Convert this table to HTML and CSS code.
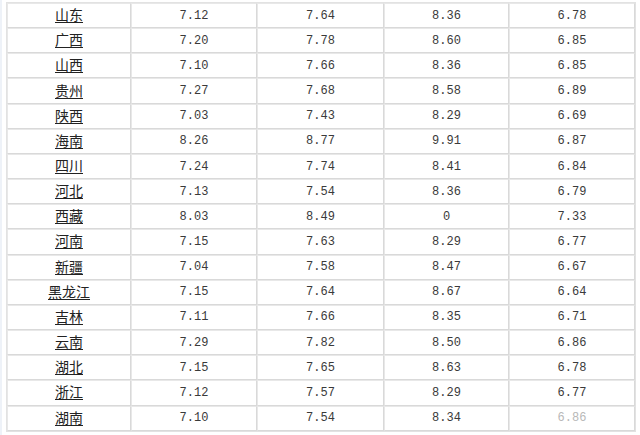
FILE: index.html
```html
<!DOCTYPE html>
<html lang="zh">
<head>
<meta charset="utf-8">
<link rel="stylesheet" href="styles.css">
</head>
<body>
<div class="page">
<table class="data">
<colgroup><col class="c1"><col class="c2"><col class="c3"><col class="c4"><col class="c5"></colgroup>
<tbody>
<tr><td><a href="#">山东</a></td><td>7.12</td><td>7.64</td><td>8.36</td><td>6.78</td></tr>
<tr><td><a href="#">广西</a></td><td>7.20</td><td>7.78</td><td>8.60</td><td>6.85</td></tr>
<tr><td><a href="#">山西</a></td><td>7.10</td><td>7.66</td><td>8.36</td><td>6.85</td></tr>
<tr><td><a href="#">贵州</a></td><td>7.27</td><td>7.68</td><td>8.58</td><td>6.89</td></tr>
<tr><td><a href="#">陕西</a></td><td>7.03</td><td>7.43</td><td>8.29</td><td>6.69</td></tr>
<tr><td><a href="#">海南</a></td><td>8.26</td><td>8.77</td><td>9.91</td><td>6.87</td></tr>
<tr><td><a href="#">四川</a></td><td>7.24</td><td>7.74</td><td>8.41</td><td>6.84</td></tr>
<tr><td><a href="#">河北</a></td><td>7.13</td><td>7.54</td><td>8.36</td><td>6.79</td></tr>
<tr><td><a href="#">西藏</a></td><td>8.03</td><td>8.49</td><td>0</td><td>7.33</td></tr>
<tr><td><a href="#">河南</a></td><td>7.15</td><td>7.63</td><td>8.29</td><td>6.77</td></tr>
<tr><td><a href="#">新疆</a></td><td>7.04</td><td>7.58</td><td>8.47</td><td>6.67</td></tr>
<tr><td><a href="#">黑龙江</a></td><td>7.15</td><td>7.64</td><td>8.67</td><td>6.64</td></tr>
<tr><td><a href="#">吉林</a></td><td>7.11</td><td>7.66</td><td>8.35</td><td>6.71</td></tr>
<tr><td><a href="#">云南</a></td><td>7.29</td><td>7.82</td><td>8.50</td><td>6.86</td></tr>
<tr><td><a href="#">湖北</a></td><td>7.15</td><td>7.65</td><td>8.63</td><td>6.78</td></tr>
<tr><td><a href="#">浙江</a></td><td>7.12</td><td>7.57</td><td>8.29</td><td>6.77</td></tr>
<tr><td><a href="#">湖南</a></td><td>7.10</td><td>7.54</td><td>8.34</td><td class="faded">6.86</td></tr>
</tbody>
</table>
</div>
</body>
</html>
```
FILE: styles.css
```css
html, body {
  margin: 0;
  padding: 0;
  background: #ffffff;
}
.page {
  width: 640px;
  height: 435px;
  overflow: hidden;
  box-sizing: border-box;
  border-left: 2px solid #eef2f8;
  padding: 2px 0 0 4px;
}
.data {
  border-collapse: separate;
  border-spacing: 0;
  width: 630px;
  table-layout: fixed;
  border: 1px solid #e2e2e2;
}
.c1 { width: 124px; }
.c2 { width: 126px; }
.c3 { width: 127px; }
.c4 { width: 125px; }
.c5 { width: 126px; }
.data td {
  height: 23.16px;
  padding: 0;
  border: 1px solid #d9d9d9;
  border-top-color: #e8e8e8;
  border-left-color: #e8e8e8;
  text-align: center;
  vertical-align: middle;
  font-family: "Liberation Mono", monospace;
  font-size: 12px;
  color: #3a3a3a;
  line-height: 16px;
}
.data td a {
  font-family: "Noto Sans CJK SC", sans-serif;
  font-size: 14px;
  color: #222222;
  text-decoration: underline;
  text-underline-offset: 2px;
}
.data td.faded {
  color: #b8b8b8;
}
```
